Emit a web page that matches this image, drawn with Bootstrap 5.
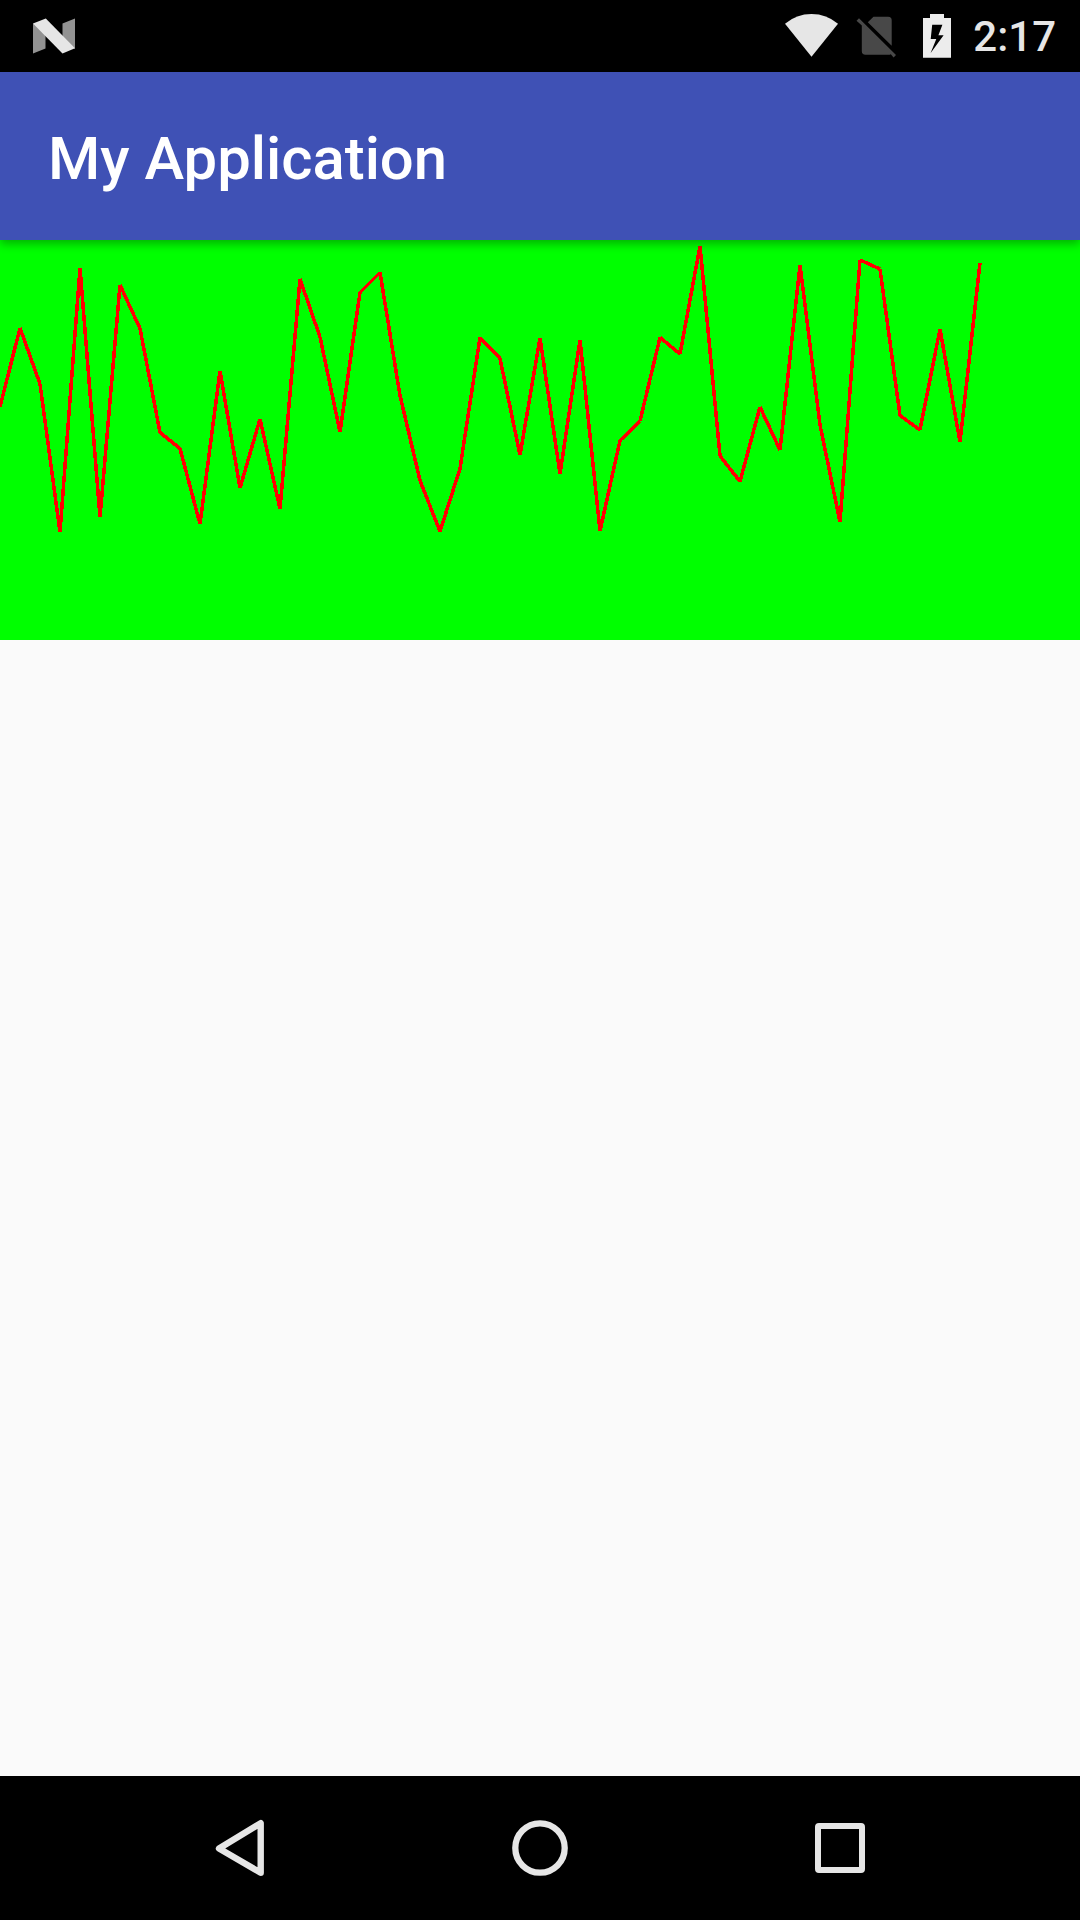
<!DOCTYPE html>
<html lang="en">
<head>
<meta charset="utf-8">
<meta name="viewport" content="width=device-width, initial-scale=1">
<title>My Application</title>
<link href="https://cdn.jsdelivr.net/npm/bootstrap@5.3.0/dist/css/bootstrap.min.css" rel="stylesheet">
<style>
  html, body { height: 100%; }
  body { font-family: Roboto, "Noto Sans", sans-serif; background: #fafafa; overflow: hidden; }
  svg { display: block; flex: none; }
  .phone { width: 1080px; height: 1920px; }
  .statusbar { height: 72px; padding: 0 24px 0 30px; }
  .clock { font-size: 42px; font-weight: 500; line-height: 72px; color: #e6e6e6; padding-top: 1px; height: 72px; }
  .appbar { height: 168px; background: #3f51b5; padding: 0 48px; box-shadow: 0 4px 9px rgba(0,0,0,.3); z-index: 1; }
  .apptitle { font-size: 59.8px; font-weight: 500; line-height: 70px; padding-top: 6px; }
  .graph { height: 400px; background: #0f0; }
  .softkeys { height: 144px; padding: 0 150px; }
</style>
</head>
<body>
<div class="phone d-flex flex-column">
  <header class="statusbar bg-black d-flex align-items-center flex-shrink-0">
    <svg width="48" height="72" viewBox="30 0 48 72">
      <path fill="#929292" d="M33 23.5L45.5 28V48.5L33 53.5zM62.5 23.5L75 18.5V49L62.5 38z"/>
      <path fill="#e6e6e6" d="M33 23.5L45.8 18.5L75 48.3L62.5 53.5z"/>
    </svg>
    <svg class="ms-auto" width="190" height="72" viewBox="782 0 190 72">
      <path fill="#e6e6e6" d="M785 23.7Q796.5 14 811.5 14T838 23.7L811.5 56.7z"/>
      <path fill="#484848" d="M867.8 22.2L873.5 16.7H888.2Q891.7 16.7 891.7 20.2V45.8zM861.8 25.6V51Q861.8 54.8 865.5 54.8H888.5Q889.8 54.8 890.8 54.2L893.6 57.5L896 55.1L859 18.3L856.5 20.8z"/>
      <path fill="#ececec" fill-rule="evenodd" d="M930 14H944V18H951V57.8H923V18H930zM932.2 24.7L930.7 39H936.3L930.5 53.3L943.6 35.3H938.4L942.4 24.7z"/>
    </svg>
    <div class="clock text-end" style="width:84px">2:17</div>
  </header>

  <nav class="appbar d-flex align-items-center flex-shrink-0 position-relative">
    <h1 class="apptitle text-white mb-0">My Application</h1>
  </nav>

  <main class="flex-grow-1">
    <section class="graph">
      <svg id="plot" width="1080" height="400" viewBox="0 240 1080 400" shape-rendering="crispEdges">
        <path fill="none" stroke="#f00" stroke-width="3.5"/>
      </svg>
    </section>
  </main>

  <footer class="softkeys bg-black d-flex align-items-center justify-content-between flex-shrink-0">
    <svg width="180" height="144" viewBox="150 1776 180 144"><path d="M260.7 1823.2V1872.8L219 1848.5z" fill="none" stroke="#e6e6e6" stroke-width="6.4" stroke-linejoin="round"/></svg>
    <svg width="180" height="144" viewBox="450 1776 180 144"><circle cx="540" cy="1848" r="24.7" fill="none" stroke="#e6e6e6" stroke-width="6.3"/></svg>
    <svg width="180" height="144" viewBox="750 1776 180 144"><path fill="#e6e6e6" fill-rule="evenodd" d="M819 1823H861Q865 1823 865 1827V1869Q865 1873 861 1873H819Q815 1873 815 1869V1827Q815 1823 819 1823zM821 1829V1867H859V1829z"/></svg>
  </footer>
</div>
<script src="https://cdn.jsdelivr.net/npm/bootstrap@5.3.0/dist/js/bootstrap.bundle.min.js"></script>
<script>
  // Samples are 20px apart; each pair is drawn as a separate square-ended segment.
  const samples = [407,328,384,532,268,517,285,328.5,432.5,448.5,524,371,488,419,509,279,337,432,
    292.5,272.5,395.5,480.5,531.5,468.5,337.5,358.5,455,338,474,340,531,440.5,421,337.5,354,246,456,
    481.5,407,450,265,425,522,260,269,415.5,430,329,442,263];
  document.querySelector('#plot path').setAttribute('d',
    samples.slice(1).map((y, i) => `M${i * 20} ${samples[i]}L${(i + 1) * 20} ${y}`).join(''));
</script>
</body>
</html>
